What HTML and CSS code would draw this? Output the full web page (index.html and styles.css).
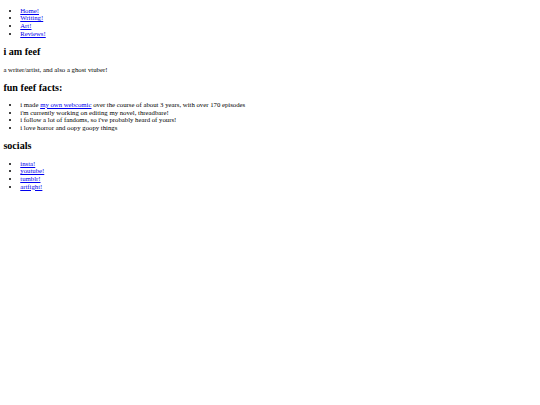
FILE: index.html
```html
<!DOCTYPE html>
<html>
<head>
<meta charset="utf-8">
<title>feef</title>
<link rel="stylesheet" href="styles.css">
</head>
<body>
<ul class="list">
<li><a href="#">Home!</a></li>
<li><a href="#">Writing!</a></li>
<li><a href="#">Art!</a></li>
<li><a href="#">Reviews!</a></li>
</ul>
<h2 class="heading">i am feef</h2>
<p class="text">a writer/artist, and also a ghost vtuber!</p>
<h2 class="heading">fun feef facts:</h2>
<ul class="list">
<li>i made <a href="#">my own webcomic</a> over the course of about 3 years, with over 170 episodes</li>
<li>i'm currently working on editing my novel, threadbare!</li>
<li>i follow a lot of fandoms, so i've probably heard of yours!</li>
<li>i love horror and oopy goopy things</li>
</ul>
<h2 class="heading">socials</h2>
<ul class="list">
<li><a href="#">insta!</a></li>
<li><a href="#">youtube!</a></li>
<li><a href="#">tumblr!</a></li>
<li><a href="#">artfight!</a></li>
</ul>
</body>
</html>
```

FILE: styles.css
```css
body {
  margin: 0 3.375px 3.375px;
  font-family: "Liberation Serif", "Times New Roman", serif;
  font-size: 6.75px;
  color: #000;
  background: #fff;
}
.list {
  margin: 6.75px 0;
  padding-left: 16.875px;
  list-style: disc;
}
.list li {
  line-height: 7.7px;
}
.heading {
  font-size: 10.125px;
  font-weight: bold;
  margin: 8.4px 0;
}
.text {
  margin: 9.2px 0 6.75px;
}
a {
  color: #0000ee;
}
```
